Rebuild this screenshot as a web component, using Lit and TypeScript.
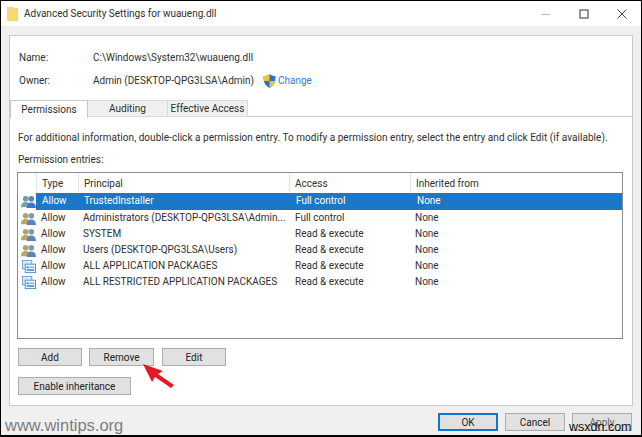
import { LitElement, html, css, svg } from "lit";
import { customElement } from "lit/decorators.js";

const users = (sel: boolean) => svg`<svg class="ic" viewBox="0 0 16 16" width="15" height="15">
<circle cx="5" cy="5" r="3" fill="${sel ? "#5fa0a8" : "#a9a86a"}"/><path d="M0 14c0-4 2-5.500 5-5.500S10 10 10 14z" fill="${sel ? "#6fa8a0" : "#b8a868"}"/>
<circle cx="11" cy="5" r="3" fill="${sel ? "#4f86c0" : "#8098b8"}"/><path d="M6 15c0-4 2-6 5-6s5 2 5 6z" fill="${sel ? "#3f78c0" : "#5f83b8"}"/></svg>`;
const pkg = svg`<svg class="ic" viewBox="0 0 16 16" width="15" height="15">
<rect x="1.500" y="1.500" width="10" height="9" fill="#d8eaf8" stroke="#6f9cc8"/>
<rect x="4.500" y="5.500" width="11" height="9" fill="#f0f7fd" stroke="#4f8cc8"/>
<rect x="6" y="8" width="2.500" height="1.500" fill="#2f7fc8"/><rect x="9.500" y="8" width="4.500" height="1.500" fill="#7fb0dc"/>
<rect x="6" y="11" width="8" height="1.500" fill="#2f7fc8"/></svg>`;

const rows: [any, string, string][] = [
  [users(true), "TrustedInstaller", "Full control"],
  [users(false), "Administrators (DESKTOP-QPG3LSA\\Admin...", "Full control"],
  [users(false), "SYSTEM", "Read & execute"],
  [users(false), "Users (DESKTOP-QPG3LSA\\Users)", "Read & execute"],
  [pkg, "ALL APPLICATION PACKAGES", "Read & execute"],
  [pkg, "ALL RESTRICTED APPLICATION PACKAGES", "Read & execute"],
];

@customElement("app-root")
export class AppRoot extends LitElement {
  static styles = css`
    :host { display: block; width: 642px; height: 437px; font-family: Roboto, "Noto Sans", sans-serif; font-size: 10px; color: #2f2f2f; }
    * { box-sizing: border-box; }
    .win { position: relative; width: 642px; height: 437px; border: 1px solid #000; border-width: 1px 1px 2px 1px; background: #f0f0f0; display: flex; flex-direction: column; overflow: hidden; }
    .title { height: 25px; background: #fff; display: flex; align-items: center; padding-left: 6px; flex: none; }
    .title .name { flex: 1; margin-left: 6px; }
    .ctl { width: 38px; display: flex; justify-content: center; align-items: center; }
    .panel { margin: 9px 8px 0 8px; width: 624px; height: 371px; background: #fff; border: 1px solid #c8c8c8; display: flex; flex-direction: column; flex: none; }
    .info { display: grid; grid-template-columns: 74px auto; row-gap: 8px; padding: 14px 0 0 9px; height: 64px; align-content: start; grid-auto-rows: 15px; align-items: center; }
    .owner { display: flex; align-items: center; }
    .shield { margin-left: 9px; margin-right: 2px; }
    .link { color: #2e7fd0; }
    .tabs { display: flex; height: 17px; border-bottom: 1px solid #c8c8c8; flex: none; }
    .tab { width: 80px; height: 17px; background: #f0f0f0; border: 1px solid #d9d9d9; border-left: none; display: flex; align-items: center; justify-content: center; }
    .tab.on { width: 78px; background: #fff; border: 1px solid #c8c8c8; border-bottom: none; height: 18px; }
    .desc { padding: 14px 0 0 8px; height: 28px; line-height: 14px; white-space: nowrap; flex: none; letter-spacing: 0.04px; }
    .lbl { padding: 0 0 0 8px; margin-top: 8px; height: 18px; line-height: 14px; flex: none; }
    .list { margin: 1px 0 0 7px; width: 606px; height: 167px; border: 1px solid #8c8c8c; background: #fff; flex: none; }
    .head, .row { display: grid; grid-template-columns: 18px 42px 211px 121px 1fr; }
    .head { height: 20px; align-items: center; }
    .head span { height: 20px; line-height: 21px; padding-left: 5px; border-left: 1px solid #e5e5e5; }
    .head span:first-child { border-left: none; }
    .row { height: 16px; align-items: center; line-height: 16px; white-space: nowrap; }
    .row.sel { height: 17px; line-height: 15px; }
    .row .ic { margin-left: 3px; }
    .cell { padding-left: 5px; height: 100%; }
    .row.sel .cell { background: #1b78c8; color: #fff; padding-left: 6px; }
    .row .acc { padding-left: 6px; }
    .row.sel .acc, .row.sel .inh { padding-left: 7px; }
    .btns { display: flex; gap: 7px; padding-left: 8px; margin-top: 9px; flex: none; }
    .btn { height: 18px; background: #e1e1e1; border: 1px solid #adadad; display: flex; align-items: center; justify-content: center; color: #222; }
    .w64 { width: 64px; }
    .rm { width: 65px; margin-right: 1px; }
    .inh-btn { width: 113px; margin: 11px 0 0 8px; flex: none; }
    .foot { display: flex; justify-content: flex-end; gap: 7px; padding: 7px 9px 0 0; }
    .foot .btn { width: 60px; height: 18px; }
    .foot .ok { border: 2px solid #0a78d4; }
    .foot .off { color: #666; }
    .arrow { position: absolute; left: 140px; top: 359px; }
    .mark1 { position: absolute; left: 4px; top: 415px; font-family: "Liberation Sans", sans-serif; font-size: 16.5px; color: #7d7d7d; line-height: 18px; }
    .mark2 { position: absolute; left: 568px; top: 418px; font-family: "Liberation Sans", sans-serif; font-size: 12.5px; color: #111; line-height: 16px; }
  `;
  render() {
    return html`<div class="win">
      <div class="title">
        <svg width="11" height="14" viewBox="0 0 11 14"><path d="M0 0h6l1 1h4v13H0z" fill="#f7d774"/></svg>
        <span class="name">Advanced Security Settings for wuaueng.dll</span>
        <span class="ctl"><svg width="10" height="10"><path d="M0 5.500h9" stroke="#bbb"/></svg></span>
        <span class="ctl"><svg width="10" height="10"><rect x="1" y="1" width="8" height="8" fill="none" stroke="#333"/></svg></span>
        <span class="ctl"><svg width="10" height="10"><path d="M.5.500l9 9M9.500.500l-9 9" stroke="#444"/></svg></span>
      </div>
      <div class="panel">
        <div class="info">
          <span>Name:</span><span>C:\\Windows\\System32\\wuaueng.dll</span>
          <span>Owner:</span>
          <span class="owner">Admin (DESKTOP-QPG3LSA\\Admin)
            <svg class="shield" width="13" height="14" viewBox="0 0 13 14"><path d="M6.500 0C5 1.500 3 2 .5 2c0 5 .5 9 6 12 5.500-3 6-7 6-12C10 2 8 1.500 6.500 0z" fill="#2d6fc4"/><path d="M6.500 0v7H.8c.2-1.500-.3-3-.3-5C3 2 5 1.500 6.500 0zM6.500 7h5.800c-.5 3-2 5.300-5.800 7z" fill="#f2c230"/></svg>
            <span class="link">Change</span></span>
        </div>
        <div class="tabs">
          <div class="tab on">Permissions</div><div class="tab">Auditing</div><div class="tab">Effective Access</div>
        </div>
        <div class="desc">For additional information, double-click a permission entry. To modify a permission entry, select the entry and click Edit (if available).</div>
        <div class="lbl">Permission entries:</div>
        <div class="list">
          <div class="head"><span></span><span>Type</span><span>Principal</span><span>Access</span><span>Inherited from</span></div>
          ${rows.map((r, i) => html`<div class="row ${i === 0 ? "sel" : ""}">
            ${r[0]}
            <span class="cell">Allow</span><span class="cell">${r[1]}</span>
            <span class="cell acc">${r[2]}</span><span class="cell inh">None</span>
          </div>`)}
        </div>
        <div class="btns">
          <div class="btn w64">Add</div><div class="btn rm">Remove</div><div class="btn w64">Edit</div>
        </div>
        <div class="btn inh-btn">Enable inheritance</div>
      </div>
      <div class="foot">
        <div class="btn ok">OK</div><div class="btn">Cancel</div><div class="btn off">Apply</div>
      </div>
      <svg class="arrow" width="36" height="30" viewBox="0 0 36 30"><path d="M2 4L22 11 17 14 33 25 30 28 14 17 11 22z" fill="#e01b24"/></svg>
      <div class="mark1">www.wintips.org</div>
      <div class="mark2">wsxdn.com</div>
    </div>`;
  }
}
